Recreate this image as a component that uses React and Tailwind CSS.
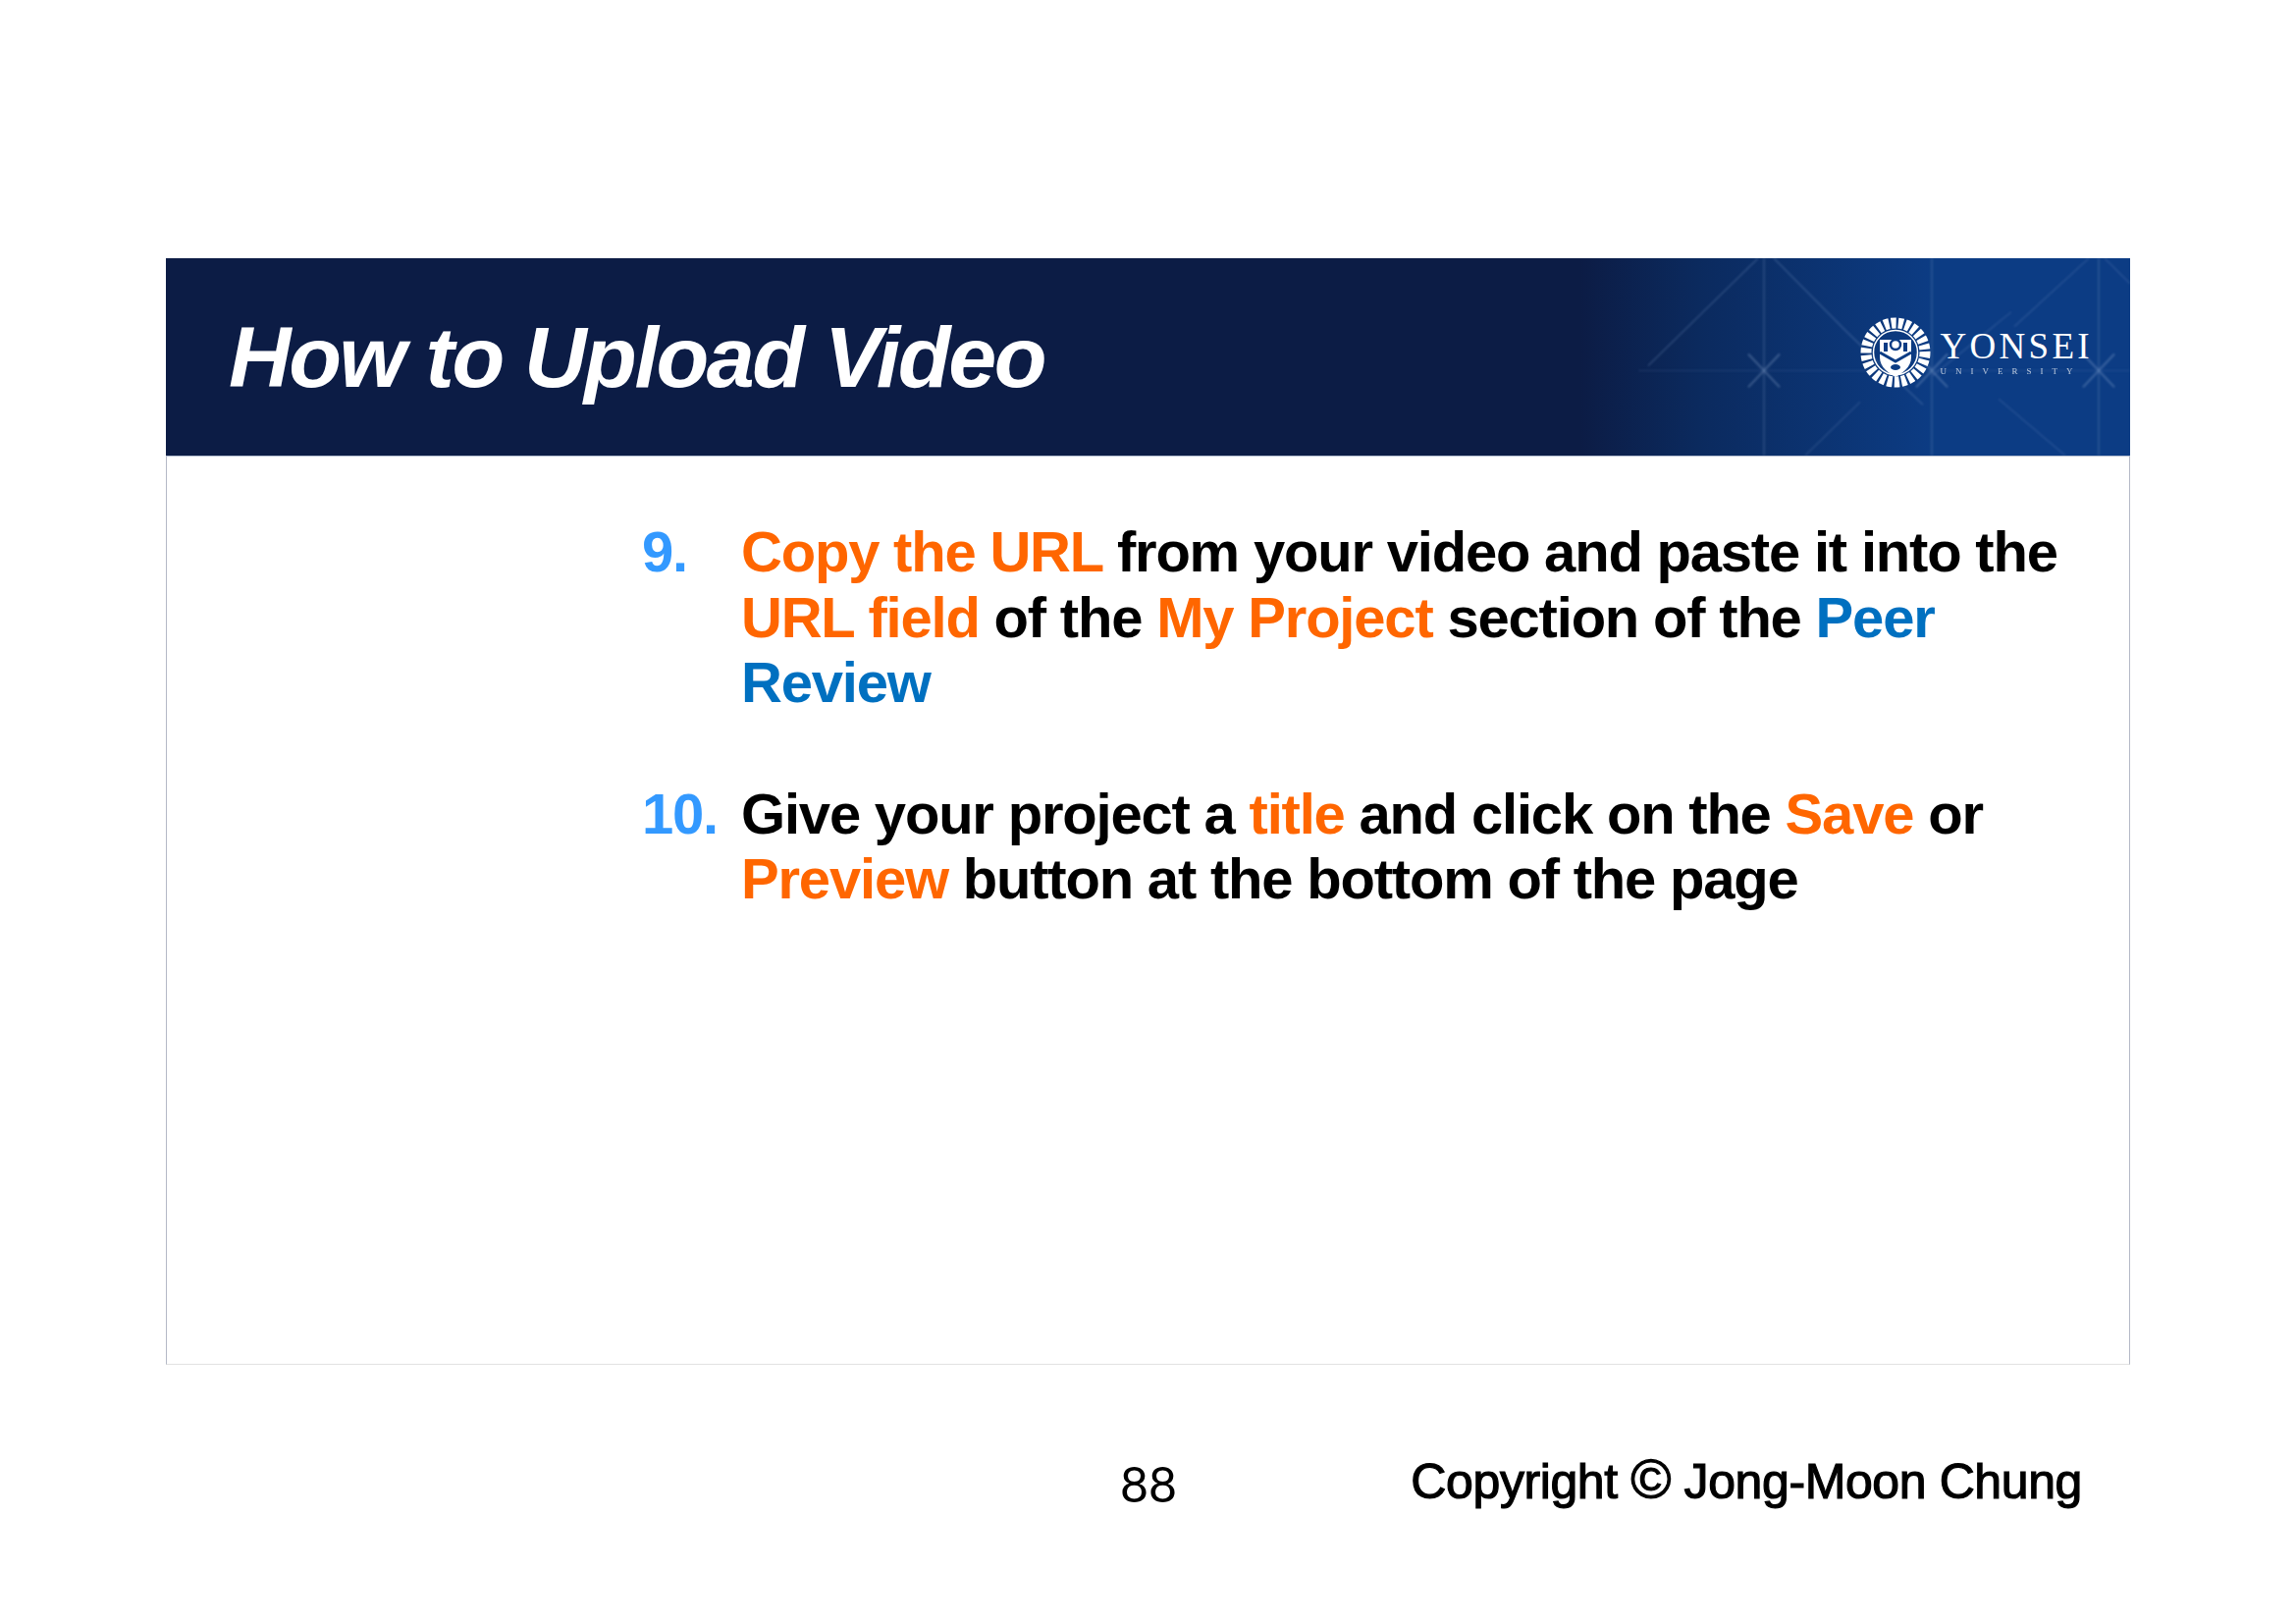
const orange = 'text-[#FF6600]';

function HeaderArt() {
  // faint light streaks behind the logo
  return (
    <svg className="absolute inset-0 w-full h-full blur-[0.8px]" viewBox="0 0 2001 202" preserveAspectRatio="none">
      <g stroke="#8aa6d2" fill="none" strokeWidth="1.5">
        <path d="M1628 0V202M1799 0V202M1969 0V202" strokeOpacity="0.26" />
        <path d="M1500 115H2001" strokeOpacity="0.12" />
        <path d="M1510 110L1622 0M1638 0L1714 77L1790 150" strokeOpacity="0.28" />
        <path d="M1670 202L1726 147M1883 70L1959 0M1975 0L2001 26M1867 144L1935 202M1800 120L1880 55" strokeOpacity="0.2" />
      </g>
      <g stroke="#a9bfe2" fill="none" strokeWidth="2" strokeOpacity="0.3">
        <path d="M1612 98L1644 132M1612 132L1644 98" />
        <path d="M1783 98L1815 132M1783 132L1815 98" />
        <path d="M1953 98L1985 132M1953 132L1985 98" />
      </g>
    </svg>
  );
}

function Seal() {
  return (
    <svg width="74" height="74" viewBox="0 0 74 74" className="shrink-0">
      <circle cx="37" cy="37" r="30" fill="none" stroke="#fff" strokeWidth="11" strokeDasharray="5 2.2" />
      <circle cx="37" cy="37" r="22.5" fill="none" stroke="#fff" strokeWidth="1.5" />
      <path d="M21 24H53V42C53 52 44 58 37 62C30 58 21 52 21 42Z" fill="#fff" />
      <path d="M21 37L37 46L53 37" fill="none" stroke="#0C3C84" strokeWidth="3" />
      <circle cx="37" cy="29" r="5" fill="none" stroke="#0C3C84" strokeWidth="2.5" />
      <ellipse cx="37" cy="52" rx="5" ry="3" fill="#0C3C84" />
      <path d="M25 27H29V36H25ZM45 27H49V36H45Z" fill="#0C3C84" />
    </svg>
  );
}

export default function App() {
  return (
    <div className="min-h-[1654px] bg-white font-['Liberation_Sans',Arial,sans-serif] text-black pt-[263px] pl-[169px]">
      <div className="w-[2001px] h-[1127px] border-x border-b border-x-[#b4b9c6] border-b-[#e2e2e2] flex flex-col">
        {/* title bar */}
        <div className="relative -mx-px h-[202px] shrink-0 border-b border-[#b6c0d2] bg-[linear-gradient(90deg,#0C1C45_0%,#0C1C45_72%,#0B2A5E_78%,#0C3C84_90%,#0C3C84_100%)] flex items-center justify-between overflow-hidden">
          <HeaderArt />
          <h1 className="relative ml-[64px] text-[88px] leading-none font-bold italic tracking-[-2.4px] text-white">How to Upload Video</h1>
          <div className="relative flex items-center mr-[38px] mb-[10px] gap-[9px] text-white">
            <Seal />
            <div className="flex flex-col items-start">
              <span className="font-['Liberation_Serif',serif] text-[37px] leading-[38px] tracking-[3.3px]">YONSEI</span>
              <span className="font-['Liberation_Serif',serif] text-[9px] leading-[12px] tracking-[9px] opacity-70">UNIVERSITY</span>
            </div>
          </div>
        </div>

        {/* steps */}
        <div className="pl-[484px] pt-[64px] flex flex-col gap-[67px] text-[58px] leading-[66.5px] font-bold tracking-[-1.2px]">
          <div className="flex">
            <span className="w-[101px] shrink-0 text-[#3399FF]">9.</span>
            <p>
              <span className={orange}>Copy the URL</span> from your video and paste it into the<br />
              <span className={orange}>URL field</span> of the <span className={orange}>My Project</span> section of the <span className="text-[#0070C0]">Peer<br />Review</span>
            </p>
          </div>
          <div className="flex">
            <span className="w-[101px] shrink-0 text-[#3399FF]">10.</span>
            <p>
              Give your project a <span className={orange}>title</span> and click on the <span className={orange}>Save</span> or<br />
              <span className={orange}>Preview</span> button at the bottom of the page
            </p>
          </div>
        </div>
      </div>

      {/* footer */}
      <div className="w-[2001px] flex items-center justify-between mt-[87px]">
        <span className="ml-[972px] mt-[4px] font-['Lato',sans-serif] text-[50px] leading-[60px]">88</span>
        <span className="mr-[49px] text-[50px] leading-[60px] tracking-[-0.4px] [-webkit-text-stroke:1.2px_#000] blur-[0.7px]">
          Copyright <span className="text-[56px] leading-none">©</span> Jong-Moon Chung
        </span>
      </div>
    </div>
  );
}
